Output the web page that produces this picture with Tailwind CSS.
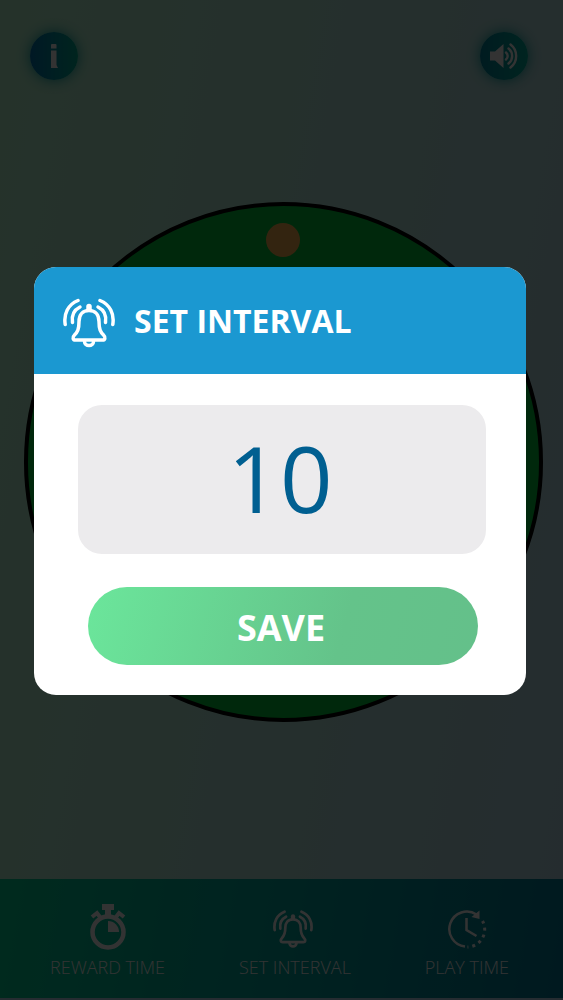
<!DOCTYPE html>
<html lang="en">
<head>
    <meta charset="UTF-8">
    <meta name="viewport" content="width=device-width, initial-scale=1.0">
    <title>Set Interval</title>
    <script src="https://cdn.jsdelivr.net/npm/@tailwindcss/browser@4"></script>
</head>
<body class="font-['Open_Sans',sans-serif] text-white">
    <!-- Shared bell icon -->
    <svg class="hidden">
        <symbol id="icon-bell" viewBox="0 0 52 50" fill="none" stroke="currentColor" stroke-width="3.500" stroke-linecap="round" stroke-linejoin="round">
            <path d="M26 12.500c-6.500 0-10 4.500-10 11 0 8-1.500 10.500-4.500 13.500-2.500 2.500-1.500 5 1 5h27c2.500 0 3.500-2.500 1-5-3-3-4.500-5.500-4.500-13.500 0-6.500-3.500-11-10-11z" />
            <path d="M26 11V8.500" stroke-width="5.500" />
            <path d="M21.500 43.500a4.500 4 0 0 0 9 0" />
            <path d="M17 9C11 12 8.500 18 9.500 24.500M35 9c6 3 8.500 9 7.500 15.500" />
            <path d="M15 2.500C5 6.500.500 16 2.200 26.500M37 2.500c10 4 14.500 13.500 12.800 24" />
        </symbol>
    </svg>

    <div class="flex min-h-screen flex-col bg-linear-100 from-[#b9fad2] to-[#b9dceb]">
        <header class="flex justify-between pt-8 pr-[35px] pl-[30px]">
            <button type="button" aria-label="Info" class="flex size-12 items-center justify-center rounded-full bg-linear-to-r from-[#0078b4] to-[#00b496] shadow-[0_0_14px_#00a0a0]">
                <svg class="h-6 w-2" viewBox="0 0 8 24" fill="currentColor">
                    <path d="M2 0h3.500a1 1 0 0 1 1 1v3.500H1V1a1 1 0 0 1 1-1zM1 6.500h5.500V21L8 24H1z" />
                </svg>
            </button>
            <button type="button" aria-label="Sound" class="flex size-12 items-center justify-center rounded-full bg-linear-to-r from-[#0087a0] to-[#00b4a0] shadow-[0_0_14px_#00a0a0]">
                <svg class="size-7" viewBox="0 0 28 28" fill="none" stroke="currentColor" stroke-width="2.400" stroke-linecap="round">
                    <path d="M0 9.500h5l8.500-7.500v24L5 18.500H0z" fill="currentColor" stroke="none" />
                    <path d="M16 10.500a4.500 4.500 0 0 1 0 7M18.500 6.500a9.500 9.500 0 0 1 0 15M20.500 2.500a14.500 14.500 0 0 1 0 23" />
                </svg>
            </button>
        </header>

        <main class="flex flex-1 justify-center pt-[122px] pl-1">
            <div class="flex aspect-square w-[93%] justify-center self-start rounded-full border-4 border-black bg-[#00c83c] pt-[17px]">
                <div class="size-[34px] rounded-full bg-[#ffb450]"></div>
            </div>
        </main>

        <nav class="flex h-[121px] justify-between border-b-2 border-[#b9dcf5] bg-linear-100 from-[#00d296] via-[#00aaa0] to-[#007d9b] pt-6 pr-[54px] pl-[50px] text-lg leading-6 font-light">
            <a href="#reward" class="flex flex-col items-center">
                <svg class="mb-1 size-12" viewBox="0 0 48 48" fill="none" stroke="currentColor">
                    <path d="M18 1h12v6h-3v5h-6V7h-3z" fill="currentColor" stroke="none" />
                    <path d="M8 14l5-4 3 4M40 14l-5-4-3 4" stroke-width="4" />
                    <circle cx="24" cy="29" r="15.500" stroke-width="4.500" />
                    <path d="M24 18a11 11 0 0 1 11 11H24z" fill="currentColor" stroke="none" />
                </svg>
                REWARD TIME
            </a>
            <a href="#interval" class="flex flex-col items-center">
                <svg class="mt-1 mr-1 mb-1 h-11 w-10"><use href="#icon-bell" /></svg>
                SET INTERVAL
            </a>
            <a href="#play" class="flex flex-col items-center">
                <svg class="mt-1 mb-1 h-11 w-10" viewBox="0 0 40 44" fill="none" stroke="currentColor" stroke-width="2.500">
                    <path d="M18 39.500A17.500 17.500 0 1 1 29.500 7.500" />
                    <path d="M32.500 3.500v8.500l-8-2z" fill="currentColor" stroke="none" />
                    <path d="M35.500 14a17.500 17.500 0 0 1-15 26" stroke-width="3" stroke-dasharray="3 4" />
                    <path d="M19.500 11v12l10 6" />
                </svg>
                PLAY TIME
            </a>
        </nav>
    </div>

    <!-- Modal -->
    <div class="fixed inset-0 flex items-center bg-black/80 pr-[37px] pb-[38px] pl-[34px]">
        <form role="dialog" aria-labelledby="dialog-title" class="w-full overflow-hidden rounded-[22px] bg-white">
            <div class="flex h-[107px] items-center gap-[19px] bg-[#1b98d1] px-[29px] pt-1">
                <svg class="h-[50px] w-[52px]"><use href="#icon-bell" /></svg>
                <h1 id="dialog-title" class="pb-1 text-[32px] font-bold">SET INTERVAL</h1>
            </div>
            <div class="pt-[31px] pr-10 pb-[30px] pl-11">
                <input type="text" inputmode="numeric" value="10" aria-labelledby="dialog-title" class="h-[149px] w-full rounded-3xl bg-[#ecebed] pr-1 pb-1 text-center text-[92px] text-[#005f91]">
                <div class="mt-[33px] pr-2 pl-[10px]">
                    <button type="submit" class="h-[78px] w-full rounded-full bg-linear-105 from-[#6be69b] via-[#64c38a] via-65% to-[#64c08a] pt-1 pr-1 text-4xl font-bold">SAVE</button>
                </div>
            </div>
        </form>
    </div>
</body>
</html>
